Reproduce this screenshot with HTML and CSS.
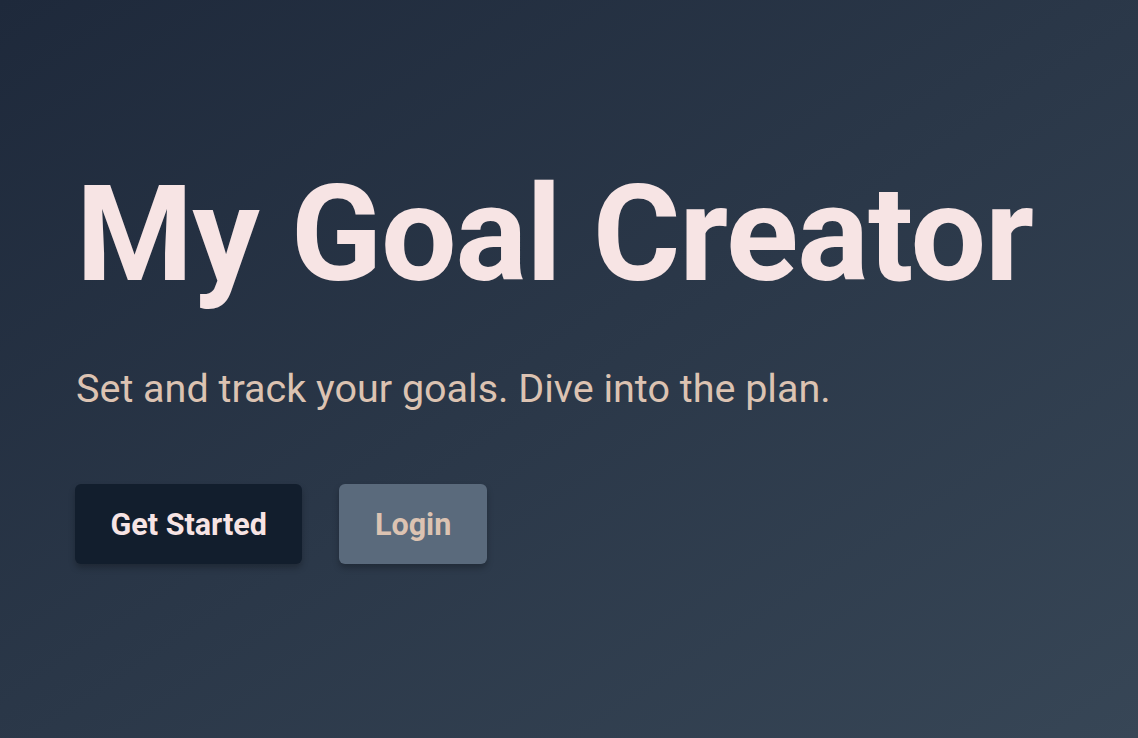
FILE: index.html
```html
<!DOCTYPE html>
<html lang="en">
<head>
<meta charset="utf-8">
<title>My Goal Creator</title>
<link rel="stylesheet" href="styles.css">
</head>
<body>
<main class="hero">
  <h1 class="title">My Goal Creator</h1>
  <p class="subtitle">Set and track your goals. Dive into the plan.</p>
  <div class="actions">
    <button class="btn btn-primary">Get Started</button>
    <button class="btn btn-secondary">Login</button>
  </div>
</main>
</body>
</html>
```
FILE: styles.css
```css
html, body {
  margin: 0;
  padding: 0;
  height: 100%;
}
body {
  font-family: Roboto, "Liberation Sans", sans-serif;
  background: linear-gradient(to bottom right, #1e293b, #374656);
  min-height: 738px;
}
.hero {
  padding: 168px 76px 0 75px;
  display: flex;
  flex-direction: column;
  align-items: flex-start;
}
.title {
  margin: 0 0 0 1px;
  font-size: 134px;
  font-weight: 700;
  line-height: 1;
  color: #f7e4e4;
  letter-spacing: -1.1px;
  white-space: nowrap;
}
.subtitle {
  margin: 63px 0 0 1px;
  font-size: 39.5px;
  font-weight: 400;
  color: #dcc3b2;
  line-height: 1.2;
}
.actions {
  display: flex;
  gap: 37px;
  margin-top: 72px;
}
.btn {
  font-family: inherit;
  font-size: 30.5px;
  font-weight: 700;
  border: none;
  border-radius: 6px;
  height: 80px;
  padding: 0 35.5px;
  box-shadow: 0 4px 6px rgba(0,0,0,0.25);
}
.btn-primary {
  background: #121e2d;
  color: #f7e4e4;
}
.btn-secondary {
  background: #5a6a7c;
  color: #dcc3b2;
}
```
